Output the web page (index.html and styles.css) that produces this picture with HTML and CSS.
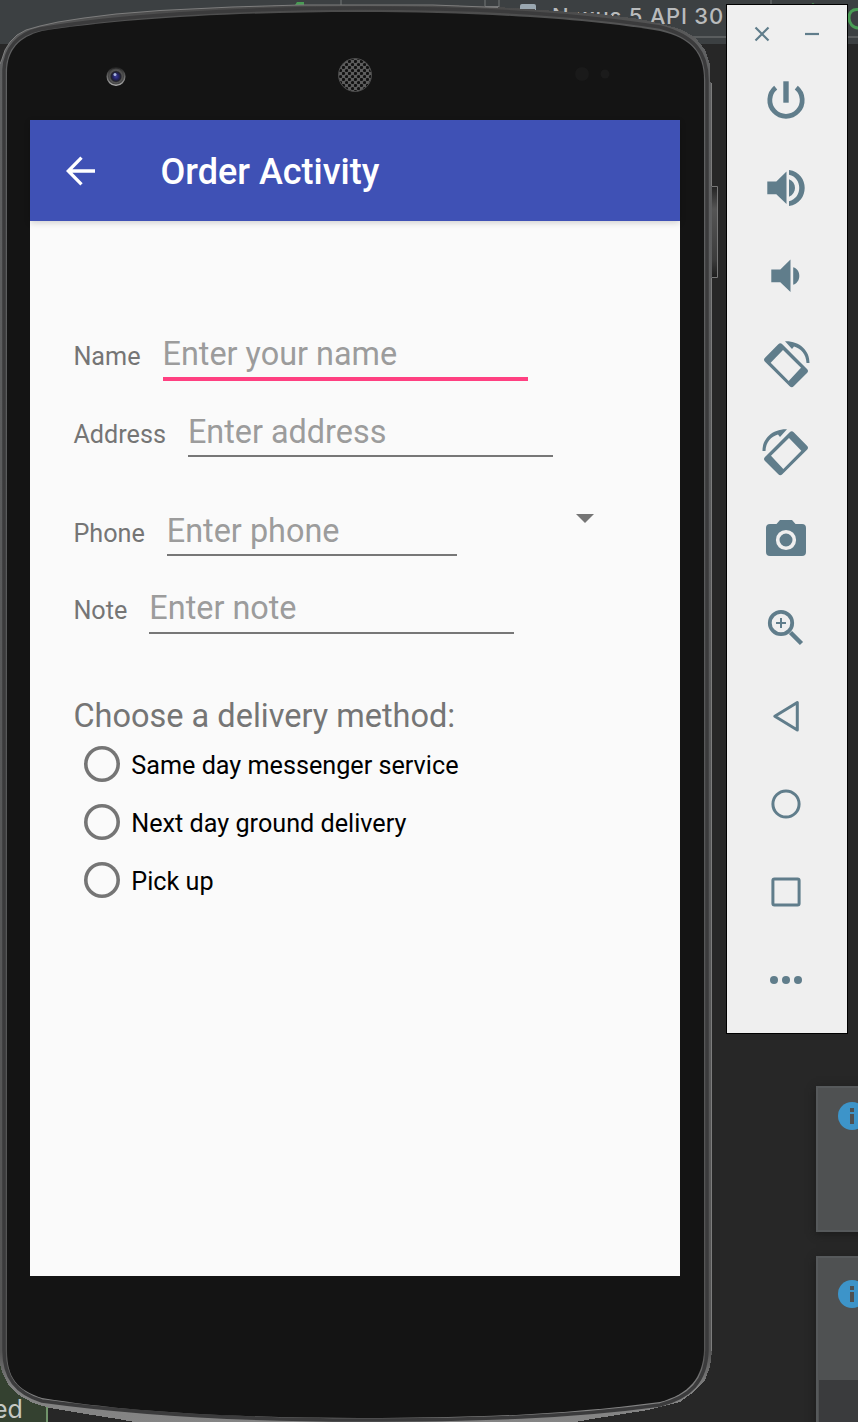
FILE: index.html
```html
<!DOCTYPE html>
<html lang="en">
<head>
<meta charset="utf-8">
<title>Order Activity</title>
<link rel="stylesheet" href="styles.css">
</head>
<body>
<div class="desktop">
  <header class="ide-bar">
    <svg class="ide-marks" width="858" height="44" viewBox="0 0 858 44">
      <path d="M295 5l2-3h7v4z" fill="#499c54"/>
      <path d="M341 0v6M485 0v8M499 0v8M771 0v6" stroke="#626567" stroke-width="1.5"/>
      <path d="M485 6.500h14" stroke="#77797a"/>
      <rect x="520" y="4" width="16" height="12" rx="2" fill="#9aa7b0"/>
      <path d="M640 37h218" stroke="#5a5d5e" stroke-width="2"/>
      <path d="M810 5l3-2 3 2z" fill="#499c54"/>
      <path d="M858 9.500c-6-.5-9 3-9 8.500s4 10 9 10" fill="none" stroke="#499c54" stroke-width="3"/>
    </svg>
    <span class="device-name">Nexus 5 API 30</span>
  </header>

  <div class="build-toast">ed</div>

  <aside class="notice notice-first">
    <svg width="28" height="28" viewBox="0 0 28 28"><circle cx="14" cy="14" r="14" fill="#3d94c9"/><path d="M12 6h4v4h-4zM12 12h4v10h-4z" fill="#4f5152"/></svg>
  </aside>
  <aside class="notice notice-second">
    <svg width="28" height="28" viewBox="0 0 28 28"><circle cx="14" cy="14" r="14" fill="#3d94c9"/><path d="M12 6h4v4h-4zM12 12h4v10h-4z" fill="#4f5152"/></svg>
    <div class="notice-footer"></div>
  </aside>

  <main class="phone">
    <svg class="phone-shell" width="720" height="1422" viewBox="0 0 720 1422">
      <defs>
        <linearGradient id="edge" x1="0" x2="0" y1="0" y2="1"><stop offset="0" stop-color="#484848"/><stop offset=".03" stop-color="#606162"/><stop offset=".5" stop-color="#58595a"/><stop offset=".95" stop-color="#555"/><stop offset=".975" stop-color="#808080"/><stop offset="1" stop-color="#858585"/></linearGradient>
        <linearGradient id="key" x1="0" x2="0" y1="0" y2="1"><stop offset="0" stop-color="#222"/><stop offset=".25" stop-color="#555"/><stop offset=".8" stop-color="#3c3c3c"/><stop offset="1" stop-color="#1c1c1c"/></linearGradient>
        <radialGradient id="lens"><stop offset="0" stop-color="#3d3d9c"/><stop offset=".35" stop-color="#22225f"/><stop offset=".55" stop-color="#22222a"/><stop offset=".7" stop-color="#555"/><stop offset="1" stop-color="#333"/></radialGradient>
        <linearGradient id="ring" x1="0" x2="0" y1="0" y2="1"><stop offset="0" stop-color="#222"/><stop offset="1" stop-color="#aaa"/></linearGradient>
        <pattern id="mesh" width="6" height="6" patternUnits="userSpaceOnUse"><rect width="6" height="6" fill="#5d5d5d"/><circle cx="1.500" cy="1.500" r="1.600" fill="#111"/><circle cx="4.500" cy="4.500" r="1.600" fill="#111"/></pattern>
      </defs>
      <rect x="710" y="186" width="7.500" height="92" fill="url(#key)"/>
      <path d="M712 186.500h5.500v91h-5.500" fill="none" stroke="#777"/>
      <path shape-rendering="crispEdges" d="M0 64L2 59L5 50L10 42L17 35L26 30L40 26L58 22L84 18L116 14L160 10.500L232 7L300 4.500L433 4.500L498 7L542 10L600 14L640 19L662 24L680 29L695 37L705 50L709.500 63L710 82L712 83V1351L710 1367L705 1380L695 1391L680 1402L648 1410L592 1419L570 1423H140L118 1419L86 1414L50 1408L33 1403L17 1394L8 1384L2 1372L0 1364Z" fill="url(#edge)"/>
      <path d="M711.500 83V186M711.500 278V1351M0 64L2 59L5 50L10 42L17 35L26 30L40 26L58 22L84 18L116 14L160 10.500L232 7L300 5H433L498 7.500" fill="none" stroke="#7d7d7d"/>
      <path d="M4 1350V70C5 48 18 34 40 29C110 17 230 8 360 8C480 8 580 14 660 27C694 36 707 52 707 80V1350C706 1382 690 1397 660 1405C570 1417 480 1420 360 1420C230 1420 130 1413 42 1401C16 1393 4 1378 4 1350Z" fill="none" stroke="#3b3b3c" stroke-width="3.500"/>
      <path d="M7 1350V72C7 50 19 37 42 31C120 19 230 12 360 12C480 12 590 19 660 31C691 38 704 53 704 80V1350C703 1378 689 1394 660 1402C570 1414 480 1418 360 1418C230 1418 120 1411 42 1398C17 1390 7 1378 7 1350Z" fill="#141414"/>
      <circle cx="116" cy="76.500" r="8.800" fill="url(#lens)" stroke="url(#ring)" stroke-width="1.500"/>
      <circle cx="115" cy="74.500" r="1.500" fill="#a9b5dc"/>
      <circle cx="355" cy="75" r="16.500" fill="url(#mesh)" stroke="#4b4b4b"/>
      <circle cx="582" cy="74" r="7" fill="#1a1a1a"/><circle cx="605" cy="74" r="4.500" fill="#1b1b1b"/>
    </svg>

    <div class="screen">
      <div class="app-bar">
        <svg class="back" width="30" height="30" viewBox="0 0 30 30"><path d="M29 15H3M15.500 1.700L2.300 15l13.200 13.300" fill="none" stroke="#fff" stroke-width="3.300"/></svg>
        <h1 class="title">Order Activity</h1>
      </div>
      <form class="order-form">
        <div class="row"><label class="label">Name</label><div class="field field-active">Enter your name</div></div>
        <div class="row row-spaced"><label class="label">Address</label><div class="field">Enter address</div></div>
        <div class="row"><label class="label">Phone</label><div class="field field-short">Enter phone</div>
          <svg class="caret" width="18" height="9" viewBox="0 0 18 9"><path d="M0 0h18L9 9z" fill="#757575"/></svg></div>
        <div class="row"><label class="label">Note</label><div class="field">Enter note</div></div>
        <h2 class="delivery-title">Choose a delivery method:</h2>
        <div class="option"><span class="radio"></span>Same day messenger service</div>
        <div class="option"><span class="radio"></span>Next day ground delivery</div>
        <div class="option"><span class="radio"></span>Pick up</div>
      </form>
    </div>
  </main>

  <nav class="toolbar">
    <div class="window-controls">
      <svg width="16" height="16" viewBox="0 0 16 16"><path d="M1.500 1.500l13 13M14.500 1.500l-13 13" class="line-thin"/></svg>
      <svg width="16" height="16" viewBox="0 0 16 16"><path d="M1 8h14" class="line-thin"/></svg>
    </div>
    <div class="tool"><svg width="48" height="48" viewBox="762 76 48 48"><path d="M786 81.300v21.400" class="line" stroke-width="5.400"/><path d="M775.700 87.600A16.200 16.200 0 1 0 796.300 87.600" class="line" stroke-width="4.800"/></svg></div>
    <div class="tool"><svg width="48" height="48" viewBox="762 164 48 48"><path d="M767.300 181.500h9l10.200-10v32.500l-10.200-9.700h-9zM789 179.300c8 3 8 14.400 0 17.400zM789 170c21 3 21 33 0 36v-4.800c13.700-3 13.700-23.400 0-26.400z" class="solid"/></svg></div>
    <div class="tool"><svg width="48" height="48" viewBox="762 252 48 48"><path d="M771.300 269.500h9l10.200-10v32.500l-10.200-9.700h-9zM793.200 267.300c8.200 2 8.200 15.400 0 17.400z" class="solid"/></svg></div>
    <div class="tool"><svg width="48" height="48" viewBox="762 340 48 48"><path fill-rule="evenodd" d="M778.300 344.300q2-2 4 0L807 369q2 2 0 4l-13.300 13.300q-2 2-4 0L765 361.700q-2-2 0-4zM783 350l-12.300 12.700L788.700 381 801 367.700z" class="solid"/><path d="M785 341.300c14-.5 24.800 9 24.500 21.700h-3c-.3-8.500-5.500-14.500-12.500-16.500l-2 2.500z" class="solid"/></svg></div>
    <div class="tool"><svg width="48" height="48" viewBox="762 340 48 48"><g transform="matrix(-1 0 0 1 1572 0)"><path fill-rule="evenodd" d="M778.300 344.300q2-2 4 0L807 369q2 2 0 4l-13.300 13.300q-2 2-4 0L765 361.700q-2-2 0-4zM783 350l-12.300 12.700L788.700 381 801 367.700z" class="solid"/><path d="M785 341.300c14-.5 24.800 9 24.500 21.700h-3c-.3-8.500-5.500-14.500-12.500-16.500l-2 2.500z" class="solid"/></g></svg></div>
    <div class="tool"><svg width="48" height="48" viewBox="762 516 48 48"><path d="M770 524h6.500l3.500-4h12l3.500 4h6.500q4 0 4 4v24q0 4-4 4h-32q-4 0-4-4v-24q0-4 4-4z" class="solid"/><circle cx="786" cy="540" r="8.300" fill="#607d8b" stroke="#efefef" stroke-width="3.600"/></svg></div>
    <div class="tool"><svg width="48" height="48" viewBox="762 604 48 48"><circle cx="781" cy="623" r="11.200" class="line" stroke-width="3.800"/><path d="M781 618v10M776 623h10" class="line" stroke-width="2"/><path d="M790.500 632.500l11 11" class="line" stroke-width="4.500"/></svg></div>
    <div class="tool"><svg width="48" height="48" viewBox="762 692 48 48"><path d="M774.800 716.300L797.300 702.500v27.500z" class="line" stroke-width="3" stroke-linejoin="round"/></svg></div>
    <div class="tool"><svg width="48" height="48" viewBox="762 780 48 48"><circle cx="786" cy="804" r="13.100" class="line" stroke-width="3"/></svg></div>
    <div class="tool"><svg width="48" height="48" viewBox="762 868 48 48"><rect x="772.900" y="878.900" width="26.200" height="26.200" rx="1.500" class="line" stroke-width="3"/></svg></div>
    <div class="tool"><svg width="48" height="48" viewBox="762 956 48 48"><g class="solid"><circle cx="774" cy="980" r="4"/><circle cx="786" cy="980" r="4"/><circle cx="798" cy="980" r="4"/></g></svg></div>
  </nav>
</div>
</body>
</html>
```
FILE: styles.css
```css
* { box-sizing: border-box; }
body { margin: 0; background: #272727; font-family: Roboto, "Liberation Sans", sans-serif; }
svg { display: block; flex: none; }
.desktop { position: relative; width: 858px; height: 1422px; overflow: hidden; background: #272727; }

.ide-bar { height: 44px; background: #3c4042; }
.ide-marks { position: absolute; left: 0; top: 0; }
.device-name { position: absolute; left: 552px; top: 2px; font: 500 22px/28px Inter, sans-serif; letter-spacing: .750px; color: #b9bbbc; white-space: nowrap; }
.build-toast { position: absolute; left: 0; top: 1350px; width: 48px; height: 80px; padding: 45px 0 0 0; border-right: 2px solid #70936a; background: #344130; color: #c5c8c4; font: 25px/28px Inter, sans-serif; text-indent: -7px; }

.notice { position: absolute; left: 816px; width: 60px; border: 2px solid #56595b; background: #4f5152; box-shadow: 0 2px 8px #1b1b1b; }
.notice svg { margin-left: 20px; }
.notice-first { top: 1086px; height: 146px; padding-top: 14px; }
.notice-second { top: 1256px; height: 180px; padding-top: 22px; }
.notice-footer { height: 60px; margin: 72px 0 0 1px; background: #3a3b3d; }

.phone { position: absolute; left: 0; top: 0; width: 720px; height: 1422px; padding: 120px 0 0 30px; }
.phone-shell { position: absolute; left: 0; top: 0; }
.screen { position: relative; width: 650px; height: 1156px; background: #fafafa; }
.app-bar { display: flex; align-items: center; height: 101px; padding-left: 36px; background: #3f51b5; box-shadow: 0 2px 6px rgba(0, 0, 0, .16); }
.title { margin: 3px 0 0 64.500px; font-size: 36px; line-height: 44px; font-weight: 500; color: #fff; }

.order-form { padding: 114px 0 0 43.400px; }
.row { display: flex; align-items: baseline; height: 77.600px; }
.row-spaced { height: 99.300px; }
.label { margin-right: 22px; font-size: 25.200px; color: #757575; }
.field { width: 365px; height: 44.500px; border-bottom: 2px solid #777; font-size: 32.400px; line-height: 38px; color: #9c9c9c; white-space: nowrap; }
.field-active { height: 46px; border-bottom: 4px solid #ff4081; }
.field-short { width: 290px; }
.caret { align-self: flex-start; margin: 2px 0 0 119px; }
.delivery-title { margin: 30px 0 0; font-size: 32.500px; line-height: 38px; font-weight: 400; color: #757575; }
.option { display: flex; align-items: center; height: 58px; padding: 2px 0 0 10.600px; font-size: 25.200px; color: #000; }
.radio { width: 36px; height: 36px; margin: 0 11.300px 2px 0; border-radius: 50%; box-shadow: inset 0 0 0 3.600px #757575; }

.toolbar { position: absolute; left: 726px; top: 4px; width: 122px; height: 1030px; border: 1px solid #000; background: #efefef; }
.window-controls { display: flex; gap: 34px; height: 51px; padding: 21px 0 0 27px; }
.tool { display: flex; align-items: center; height: 88px; padding-left: 35px; }
.solid { fill: #607d8b; }
.line { fill: none; stroke: #607d8b; }
.line-thin { fill: none; stroke: #607d8b; stroke-width: 2.200; }
```
